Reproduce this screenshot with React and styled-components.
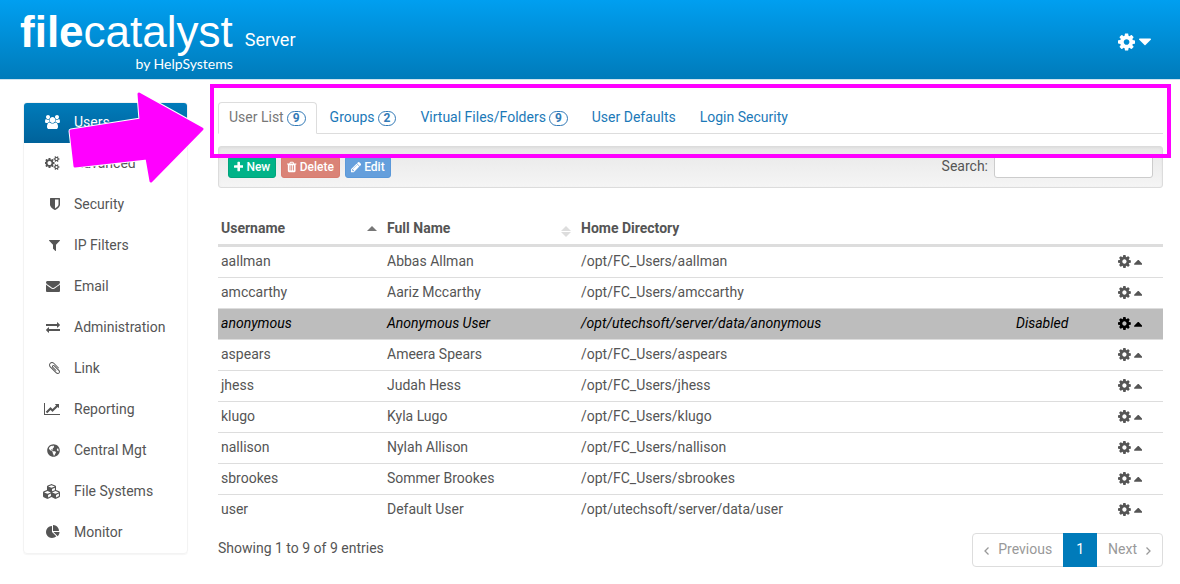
import React from "react";
import styled, { createGlobalStyle, css } from "styled-components";
import { FaCubes, FaGlobeAmericas } from "react-icons/fa";

const GlobalStyle = createGlobalStyle`
  *, *::before, *::after { box-sizing: border-box; }
  body {
    margin: 0;
    background: #fff;
    color: #555;
    font-family: Roboto, "Liberation Sans", sans-serif;
    font-size: 14px;
    line-height: 20px;
  }
  button, input { font: inherit; }
  a { text-decoration: none; }
`;

/* ---------- icons: [min x, width, path] on a 1792-unit tall grid ---------- */

const GLYPHS = {
  cog: [128, 1536, "M1152 896q0-106-75-181t-181-75-181 75-75 181 75 181 181 75 181-75 75-181zm512-109v222q0 12-8 23t-20 13l-185 28q-19 54-39 91 35 50 107 138 10 12 10 25t-9 23q-27 37-99 108t-94 71q-12 0-26-9l-138-108q-44 23-91 38-16 136-29 186-7 28-36 28h-222q-14 0-24.5-8.5t-11.5-21.5l-28-184q-49-16-90-37l-141 107q-10 9-25 9-14 0-25-11-126-114-165-168-7-10-7-23 0-12 8-23 15-21 51-66.5t54-70.5q-27-50-41-99l-183-27q-13-2-21-12.5t-8-23.5v-222q0-12 8-23t19-13l186-28q14-46 39-92-40-57-107-138-10-12-10-24 0-10 9-23 26-36 98.5-107.5t94.5-71.5q13 0 26 10l138 107q44-23 91-38 16-136 29-186 7-28 36-28h222q14 0 24.5 8.5t11.5 21.5l28 184q49 16 90 37l142-107q9-9 24-9 13 0 25 10 129 119 165 170 7 8 7 22 0 12-8 23-15 21-51 66.5t-54 70.5q26 50 41 98l183 28q13 2 21 12.5t8 23.5z"],
  cogs: [0, 1920, "M832 896q0-106-75-181t-181-75-181 75-75 181 75 181 181 75 181-75 75-181zm768 512q0-52-38-90t-90-38-90 38-38 90q0 53 37.5 90.5t90.5 37.5 90.5-37.5 37.5-90.5zm0-1024q0-52-38-90t-90-38-90 38-38 90q0 53 37.5 90.5t90.5 37.5 90.5-37.5 37.5-90.5zm-384 421v185q0 10-7 19.5t-16 10.5l-155 24q-11 35-32 76 34 48 90 115 7 11 7 20 0 12-7 19-23 30-82.5 89.5t-78.5 59.5q-11 0-21-7l-115-90q-37 19-77 31-11 108-23 155-7 24-30 24h-186q-11 0-20-7.5t-10-17.5l-23-153q-34-10-75-31l-118 89q-7 7-20 7-11 0-21-8-144-133-144-160 0-9 7-19 10-14 41-53t47-61q-23-44-35-82l-152-24q-10-1-17-9.5t-7-19.5v-185q0-10 7-19.5t16-10.5l155-24q11-35 32-76-34-48-90-115-7-11-7-20 0-12 7-20 22-30 82-89t79-59q11 0 21 7l115 90q34-18 77-32 11-108 23-154 7-24 30-24h186q11 0 20 7.5t10 17.5l23 153q34 10 75 31l118-89q8-7 20-7 11 0 21 8 144 133 144 160 0 8-7 19-12 16-42 54t-45 60q23 48 34 82l152 23q10 2 17 10.5t7 19.5zm640 533v140q0 16-149 31-12 27-30 52 51 113 51 138 0 4-4 7-122 71-124 71-8 0-46-47t-52-68q-20 2-30 2t-30-2q-14 21-52 68t-46 47q-2 0-124-71-4-3-4-7 0-25 51-138-18-25-30-52-149-15-149-31v-140q0-16 149-31 13-29 30-52-51-113-51-138 0-4 4-7 4-2 35-20t59-34 30-16q8 0 46 46.5t52 67.5q20-2 30-2t30 2q51-71 92-112l6-2q4 0 124 70 4 3 4 7 0 25-51 138 17 23 30 52 149 15 149 31zm0-1024v140q0 16-149 31-12 27-30 52 51 113 51 138 0 4-4 7-122 71-124 71-8 0-46-47t-52-68q-20 2-30 2t-30-2q-14 21-52 68t-46 47q-2 0-124-71-4-3-4-7 0-25 51-138-18-25-30-52-149-15-149-31v-140q0-16 149-31 13-29 30-52-51-113-51-138 0-4 4-7 4-2 35-20t59-34 30-16q8 0 46 46.5t52 67.5q20-2 30-2t30 2q51-71 92-112l6-2q4 0 124 70 4 3 4 7 0 25-51 138 17 23 30 52 149 15 149 31z"],
  users: [0, 1920, "M593 896q-162 5-265 128h-134q-82 0-138-40.5t-56-118.5q0-353 124-353 6 0 43.5 21t97.5 42.5 119 21.5q67 0 133-23-5 37-5 66 0 139 81 256zm1071 637q0 120-73 189.5t-194 69.5h-874q-121 0-194-69.5t-73-189.5q0-53 3.5-103.5t14-109 26.5-108.5 43-97.5 62-81 85.5-53.5 111.5-20q10 0 43 21.5t73 48 107 48 135 21.5 135-21.5 107-48 73-48 43-21.5q61 0 111.5 20t85.5 53.5 62 81 43 97.5 26.5 108.5 14 109 3.5 103.5zm-1024-1277q0 106-75 181t-181 75-181-75-75-181 75-181 181-75 181 75 75 181zm704 384q0 159-112.5 271.5t-271.5 112.5-271.5-112.5-112.5-271.5 112.5-271.5 271.5-112.5 271.5 112.5 112.5 271.5zm576 225q0 78-56 118.5t-138 40.5h-134q-103-123-265-128 81-117 81-256 0-29-5-66 66 23 133 23 59 0 119-21.5t97.5-42.5 43.5-21q124 0 124 353zm-128-609q0 106-75 181t-181 75-181-75-75-181 75-181 181-75 181 75 75 181z"],
  shield: [256, 1280, "M1344 960v-640h-448v1137q119-63 213-137 235-184 235-360zm192-768v768q0 86-33.5 170.5t-83 150-118 127.5-126.5 103-121 77.5-89.5 49.5-42.5 20q-12 6-26 6t-26-6q-16-7-42.5-20t-89.5-49.5-121-77.5-126.5-103-118-127.5-83-150-33.5-170.5v-768q0-26 19-45t45-19h1152q26 0 45 19t19 45z"],
  filter: [192, 1408, "M1595 295q17 41-14 70l-493 493v742q0 42-39 59-13 5-25 5-27 0-45-19l-256-256q-19-19-19-45v-486l-493-493q-31-29-14-70 17-39 59-39h1280q42 0 59 39z"],
  envelope: [0, 1792, "M1792 710v794q0 66-47 113t-113 47h-1472q-66 0-113-47t-47-113v-794q44 49 101 87 362 246 497 345 57 42 92.5 65.5t94.5 48 110 24.5h2q51 0 110-24.5t94.5-48 92.5-65.5q170-123 498-345 57-39 100-87zm0-294q0 79-49 151t-122 123q-376 261-468 325-10 7-42.5 31t-54 38.5-52 32.5-57.5 27-50 9h-2q-23 0-50-9t-57.5-27-52-32.5-54-38.5-42.5-31q-91-64-262-182.5t-205-142.5q-62-42-117-115.5t-55-136.5q0-78 41.5-130t118.5-52h1472q65 0 112.5 47t47.5 113z"],
  exchange: [0, 1792, "M1792 1184v192q0 13-9.5 22.5t-22.5 9.5h-1376v192q0 13-9.5 22.5t-22.5 9.5q-12 0-24-10l-319-320q-9-9-9-22 0-14 9-23l320-320q9-9 23-9 13 0 22.5 9.5t9.5 22.5v192h1376q13 0 22.5 9.5t9.5 22.5zm0-544q0 14-9 23l-320 320q-9 9-23 9-13 0-22.5-9.5t-9.5-22.5v-192h-1376q-13 0-22.5-9.5t-9.5-22.5v-192q0-13 9.5-22.5t22.5-9.5h1376v-192q0-14 9-23t23-9q12 0 24 10l319 319q9 9 9 23z"],
  paperclip: [192, 1408, "M1596 1385q0 117-79 196t-196 79q-135 0-235-100l-777-776q-113-115-113-271 0-159 110-270t269-111q158 0 273 113l605 606q10 10 10 22 0 16-30.5 46.5t-46.5 30.5q-13 0-23-10l-606-607q-79-77-181-77-106 0-179 75t-73 181q0 105 76 181l776 777q63 63 145 63 64 0 106-42t42-106q0-82-63-145l-581-581q-26-24-60-24-29 0-48 19t-19 48q0 32 25 59l410 410q10 10 10 22 0 16-31 47t-47 31q-12 0-22-10l-410-410q-63-61-63-149 0-82 57-139t139-57q88 0 149 63l581 581q100 98 100 235z"],
  chart: [0, 2048, "M2048 1536v128h-2048v-1536h128v1408h1920zm-128-1248v435q0 21-19.5 29.5t-35.5-7.5l-121-121-633 633q-10 10-23 10t-23-10l-233-233-416 416-192-192 585-585q10-10 23-10t23 10l233 233 464-464-121-121q-16-16-7.5-35.5t29.5-19.5h435q14 0 23 9t9 23z"],
  pie: [0, 1792, "M768 890l546 546q-106 108-247.5 168t-298.5 60q-209 0-385.5-103t-279.5-279.5-103-385.5 103-385.5 279.5-279.5 385.5-103v762zm187 6h773q0 157-60 298.5t-168 247.5zm709-128h-768v-768q209 0 385.5 103t279.5 279.5 103 385.5z"],
  plus: [192, 1408, "M1600 736v192q0 40-28 68t-68 28h-416v416q0 40-28 68t-68 28h-192q-40 0-68-28t-28-68v-416h-416q-40 0-68-28t-28-68v-192q0-40 28-68t68-28h416v-416q0-40 28-68t68-28h192q40 0 68 28t28 68v416h416q40 0 68 28t28 68z"],
  trash: [192, 1408, "M704 1376v-704q0-14-9-23t-23-9h-64q-14 0-23 9t-9 23v704q0 14 9 23t23 9h64q14 0 23-9t9-23zm256 0v-704q0-14-9-23t-23-9h-64q-14 0-23 9t-9 23v704q0 14 9 23t23 9h64q14 0 23-9t9-23zm256 0v-704q0-14-9-23t-23-9h-64q-14 0-23 9t-9 23v704q0 14 9 23t23 9h64q14 0 23-9t9-23zm-544-992h448l-48-117q-7-9-17-11h-317q-10 2-17 11zm928 32v64q0 14-9 23t-23 9h-96v948q0 83-47 143.5t-113 60.5h-832q-66 0-113-58.5t-47-141.5v-952h-96q-14 0-23-9t-9-23v-64q0-14 9-23t23-9h309l70-167q15-37 54-63t79-26h320q40 0 79 26t54 63l70 167h309q14 0 23 9t9 23z"],
  pencil: [128, 1536, "M491 1536l91-91-235-235-91 91v107h128v128h107zm523-928q0-22-22-22-10 0-17 7l-542 542q-7 7-7 17 0 22 22 22 10 0 17-7l542-542q7-7 7-17zm-54-192l416 416-832 832h-416v-416zm683 96q0 53-37 90l-166 166-416-416 166-165q36-38 90-38 53 0 91 38l235 234q37 39 37 91z"],
  caretUp: [384, 1024, "M1408 1216q0 26-19 45t-45 19h-896q-26 0-45-19t-19-45 19-45l448-448q19-19 45-19t45 19l448 448q19 19 19 45z"],
  caretDown: [384, 1024, "M1408 704q0 26-19 45l-448 448q-19 19-45 19t-45-19l-448-448q-19-19-19-45t19-45 45-19h896q26 0 45 19t19 45z"],
};

const IconSvg = styled.svg`
  display: block;
  flex: none;
  fill: currentColor;
`;

function Icon({ name, size = 14 }) {
  const [x, w, d] = GLYPHS[name];
  return (
    <IconSvg aria-hidden="true" width={(w * size) / 1792} height={size} viewBox={`${x} 0 ${w} 1792`}>
      <path d={d} />
    </IconSvg>
  );
}

/* ---------- header ---------- */

const Header = styled.header`
  display: flex;
  align-items: center;
  justify-content: space-between;
  height: 80px;
  padding: 0 29px 0 20px;
  color: #fff;
  background: linear-gradient(#009ff0, #007bba);
  border-bottom: 1px solid #cfe3ee;
`;

const Brand = styled.div`
  display: flex;
  align-items: center;
  gap: 12px;
`;

const Logo = styled.a`
  display: flex;
  flex-direction: column;
  color: #fff;
`;

const Wordmark = styled.span`
  font-family: "Liberation Sans", Arial, sans-serif;
  font-size: 44px;
  line-height: 48px;
`;

const Byline = styled.span`
  align-self: flex-end;
  font-family: Lato, sans-serif;
  font-size: 14px;
  line-height: 16px;
`;

const Product = styled.span`
  font-size: 18px;
`;

const MenuButton = styled.button`
  display: flex;
  align-items: center;
  gap: 4px;
  padding: 0;
  border: 0;
  background: none;
  color: inherit;
  margin-top: 4px;
`;

/* ---------- page frame ---------- */

const Page = styled.div`
  position: relative;
  display: flex;
  align-items: flex-start;
  gap: 30px;
  padding: 22px 17px 16px 23px;
`;

const Sidebar = styled.nav`
  display: flex;
  flex-direction: column;
  gap: 1px;
  flex: none;
  width: 165px;
  border: 1px solid #f3f3f3;
  border-radius: 4px;
  overflow: hidden;
  box-shadow: 0 1px 1px rgba(0, 0, 0, 0.04);
`;

const NavLink = styled.a`
  display: flex;
  align-items: center;
  gap: 14px;
  height: 40px;
  padding: 0 11px 2px;
  color: #555;
  ${(p) => p.$active && css`
    color: #fff;
    background: linear-gradient(#007bba, #00629a);
  `}
`;

const NavIcon = styled.span`
  display: flex;
  justify-content: flex-end;
  width: 25px;
`;

const Content = styled.main`
  position: relative;
  flex: 1;
  min-width: 0;
`;

/* ---------- tabs ---------- */

const Tabs = styled.div`
  display: flex;
  gap: 2px;
  height: 32px;
  border-bottom: 1px solid #ddd;
`;

const Tab = styled.a`
  display: flex;
  align-items: center;
  gap: 3px;
  height: 32px;
  padding: 0 10px 2px;
  border: 1px solid transparent;
  border-radius: 4px 4px 0 0;
  color: #1b79b8;
  ${(p) => p.$active && css`
    color: #777;
    background: #fff;
    border-color: #ddd #ddd #fff;
  `}
`;

const Badge = styled.span`
  padding: 0 5px;
  margin-top: 2px;
  border: 1px solid #337ab7;
  border-radius: 8px;
  color: #337ab7;
  font-size: 12px;
  line-height: 13px;
  font-weight: 700;
`;

/* ---------- toolbar ---------- */

const Toolbar = styled.div`
  display: flex;
  align-items: center;
  justify-content: space-between;
  height: 42px;
  margin-top: 12px;
  padding: 0 9px;
  border: 1px solid #dcdcdc;
  border-radius: 3px;
  background: linear-gradient(#e8e8e8, #f5f5f5);
  box-shadow: inset 0 1px 3px rgba(0, 0, 0, 0.05);
`;

const Actions = styled.div`
  display: flex;
  gap: 5px;
`;

const ActionButton = styled.button`
  display: flex;
  align-items: center;
  gap: 3px;
  height: 22px;
  padding: 0 5px;
  border: 1px solid ${(p) => p.$edge};
  border-radius: 3px;
  background: ${(p) => p.$fill};
  color: #fff;
  font-size: 12px;
  font-weight: 500;
`;

const Search = styled.label`
  display: flex;
  align-items: center;
  gap: 6px;
  padding-bottom: 2px;
`;

const SearchInput = styled.input`
  width: 159px;
  height: 24px;
  border: 1px solid #ccc;
  border-radius: 3px;
  background: #fff;
`;

/* ---------- table ---------- */

const Table = styled.table`
  width: 100%;
  margin-top: 24px;
  border-collapse: separate;
  border-spacing: 0;
  table-layout: fixed;
`;

const HeadCell = styled.th`
  height: 35px;
  padding: 0 3px;
  border-bottom: 3px solid #ddd;
  text-align: left;
  font-weight: 700;
`;

const HeadInner = styled.span`
  display: flex;
  align-items: center;
  justify-content: space-between;
`;

const Sorter = styled.span`
  display: flex;
  flex-direction: column;
  gap: 1px;
  color: ${(p) => (p.$on ? "#777" : "#ddd")};
  margin: 0 4px 0 0;
  padding-top: ${(p) => (p.$on ? 0 : 6)}px;
`;

const Row = styled.tr`
  ${(p) => p.$disabled && css`
    background: #bdbdbd;
    color: #000;
    font-style: italic;
  `}
`;

const Cell = styled.td`
  height: 31px;
  padding: 0 3px 2px;
  border-bottom: 1px solid #ddd;
  tr:last-child > & { border-bottom-color: transparent; }
`;

const RowMenu = styled.button`
  display: flex;
  align-items: center;
  gap: 3px;
  padding: 0;
  border: 0;
  background: none;
  color: inherit;
`;

/* ---------- footer ---------- */

const Footer = styled.div`
  display: flex;
  align-items: flex-start;
  justify-content: space-between;
  margin-top: 7px;
`;

const Summary = styled.span`
  line-height: 30px;
`;

const Pager = styled.nav`
  display: flex;
  height: 34px;
  border: 1px solid #ddd;
  border-radius: 4px;
`;

const PageLink = styled.a`
  display: flex;
  align-items: center;
  gap: 9px;
  padding: 0 11px 2px;
  color: #999;
  ${(p) => p.$current && css`
    margin: -1px 0;
    padding: 0 13px 2px;
    color: #fff;
    background: #007bba;
  `}
`;

const Chevron = styled.svg`
  fill: none;
  stroke: currentColor;
  stroke-width: 1.3;
  margin-top: 3px;
`;

/* ---------- callout drawn over the page ---------- */

const Highlight = styled.div`
  position: absolute;
  top: -18px;
  left: -8px;
  right: -8px;
  height: 74px;
  border: 4px solid #ff00ff;
  pointer-events: none;
`;

const Arrow = styled.svg`
  position: absolute;
  top: 8px;
  left: 64px;
  pointer-events: none;
`;

const ARROW_OUTLINE = "M139 94L202 129L151 181L147 158L75 166L71 131L141 120Z";

const NAV = [
  ["Users", <Icon name="users" />],
  ["Advanced", <Icon name="cogs" />],
  ["Security", <Icon name="shield" />],
  ["IP Filters", <Icon name="filter" />],
  ["Email", <Icon name="envelope" />],
  ["Administration", <Icon name="exchange" />],
  ["Link", <Icon name="paperclip" />],
  ["Reporting", <Icon name="chart" />],
  ["Central Mgt", <FaGlobeAmericas size={13} />],
  ["File Systems", <FaCubes size={17} />],
  ["Monitor", <Icon name="pie" />],
];

const TABS = [
  ["User List", 9],
  ["Groups", 2],
  ["Virtual Files/Folders", 9],
  ["User Defaults"],
  ["Login Security"],
];

const USERS = [
  ["aallman", "Abbas Allman", "/opt/FC_Users/aallman"],
  ["amccarthy", "Aariz Mccarthy", "/opt/FC_Users/amccarthy"],
  ["anonymous", "Anonymous User", "/opt/utechsoft/server/data/anonymous", true],
  ["aspears", "Ameera Spears", "/opt/FC_Users/aspears"],
  ["jhess", "Judah Hess", "/opt/FC_Users/jhess"],
  ["klugo", "Kyla Lugo", "/opt/FC_Users/klugo"],
  ["nallison", "Nylah Allison", "/opt/FC_Users/nallison"],
  ["sbrookes", "Sommer Brookes", "/opt/FC_Users/sbrookes"],
  ["user", "Default User", "/opt/utechsoft/server/data/user"],
];

export default function App() {
  return (
    <>
      <GlobalStyle />
      <Header>
        <Brand>
          <Logo href="#">
            <Wordmark><b>file</b>catalyst</Wordmark>
            <Byline>by HelpSystems</Byline>
          </Logo>
          <Product>Server</Product>
        </Brand>
        <MenuButton type="button" aria-label="Settings">
          <Icon name="cog" size={20} />
          <Icon name="caretDown" size={21} />
        </MenuButton>
      </Header>

      <Page>
        <Sidebar>
          {NAV.map(([label, icon], i) => (
            <NavLink key={label} href="#" $active={i === 0}>
              <NavIcon>{icon}</NavIcon>
              {label}
            </NavLink>
          ))}
        </Sidebar>

        <Content>
          <Tabs>
            {TABS.map(([label, count], i) => (
              <Tab key={label} href="#" $active={i === 0}>
                {label}
                {count && <Badge>{count}</Badge>}
              </Tab>
            ))}
          </Tabs>

          <Toolbar>
            <Actions>
              <ActionButton type="button" $fill="#00b388" $edge="#00a57c">
                <Icon name="plus" size={12} />New
              </ActionButton>
              <ActionButton type="button" $fill="#da8377" $edge="#d87c6f">
                <Icon name="trash" size={12} />Delete
              </ActionButton>
              <ActionButton type="button" $fill="#659fdc" $edge="#5a98d9">
                <Icon name="pencil" size={12} />Edit
              </ActionButton>
            </Actions>
            <Search>
              Search:
              <SearchInput type="text" />
            </Search>
          </Toolbar>

          <Table>
            <colgroup>
              <col style={{ width: 166 }} />
              <col style={{ width: 194 }} />
              <col />
              <col style={{ width: 102 }} />
              <col style={{ width: 48 }} />
            </colgroup>
            <thead>
              <tr>
                <HeadCell>
                  <HeadInner>Username<Sorter $on>
                    <svg width="10" height="5" fill="currentColor"><path d="M0 5L5 0l5 5z" /></svg>
                  </Sorter></HeadInner>
                </HeadCell>
                <HeadCell>
                  <HeadInner>Full Name<Sorter>
                    <svg width="10" height="5" fill="currentColor"><path d="M0 5L5 0l5 5z" /></svg>
                    <svg width="10" height="5" fill="currentColor"><path d="M0 0l5 5 5-5z" /></svg>
                  </Sorter></HeadInner>
                </HeadCell>
                <HeadCell>Home Directory</HeadCell>
                <HeadCell />
                <HeadCell />
              </tr>
            </thead>
            <tbody>
              {USERS.map(([name, full, home, disabled]) => (
                <Row key={name} $disabled={disabled}>
                  <Cell>{name}</Cell>
                  <Cell>{full}</Cell>
                  <Cell>{home}</Cell>
                  <Cell>{disabled && "Disabled"}</Cell>
                  <Cell>
                    <RowMenu type="button" aria-label={`Actions for ${name}`}>
                      <Icon name="cog" size={15} />
                      <Icon name="caretUp" size={15} />
                    </RowMenu>
                  </Cell>
                </Row>
              ))}
            </tbody>
          </Table>

          <Footer>
            <Summary>Showing 1 to 9 of 9 entries</Summary>
            <Pager>
              <PageLink href="#">
                <Chevron width="5" height="8"><path d="M4.500 0.500L1 4l3.500 3.500" /></Chevron>
                Previous
              </PageLink>
              <PageLink href="#" $current>1</PageLink>
              <PageLink href="#">
                Next
                <Chevron width="5" height="8"><path d="M0.500 0.500L4 4L0.500 7.500" /></Chevron>
              </PageLink>
            </Pager>
          </Footer>

          <Highlight />
        </Content>

        <Arrow width="144" height="102" viewBox="64 88 144 102" aria-hidden="true">
          <path d={ARROW_OUTLINE} fill="#fff" stroke="#fff" strokeWidth="5" strokeLinejoin="round" />
          <path d={ARROW_OUTLINE} fill="#ff00ff" stroke="#ff00ff" strokeWidth="3" strokeLinejoin="round" />
        </Arrow>
      </Page>
    </>
  );
}
